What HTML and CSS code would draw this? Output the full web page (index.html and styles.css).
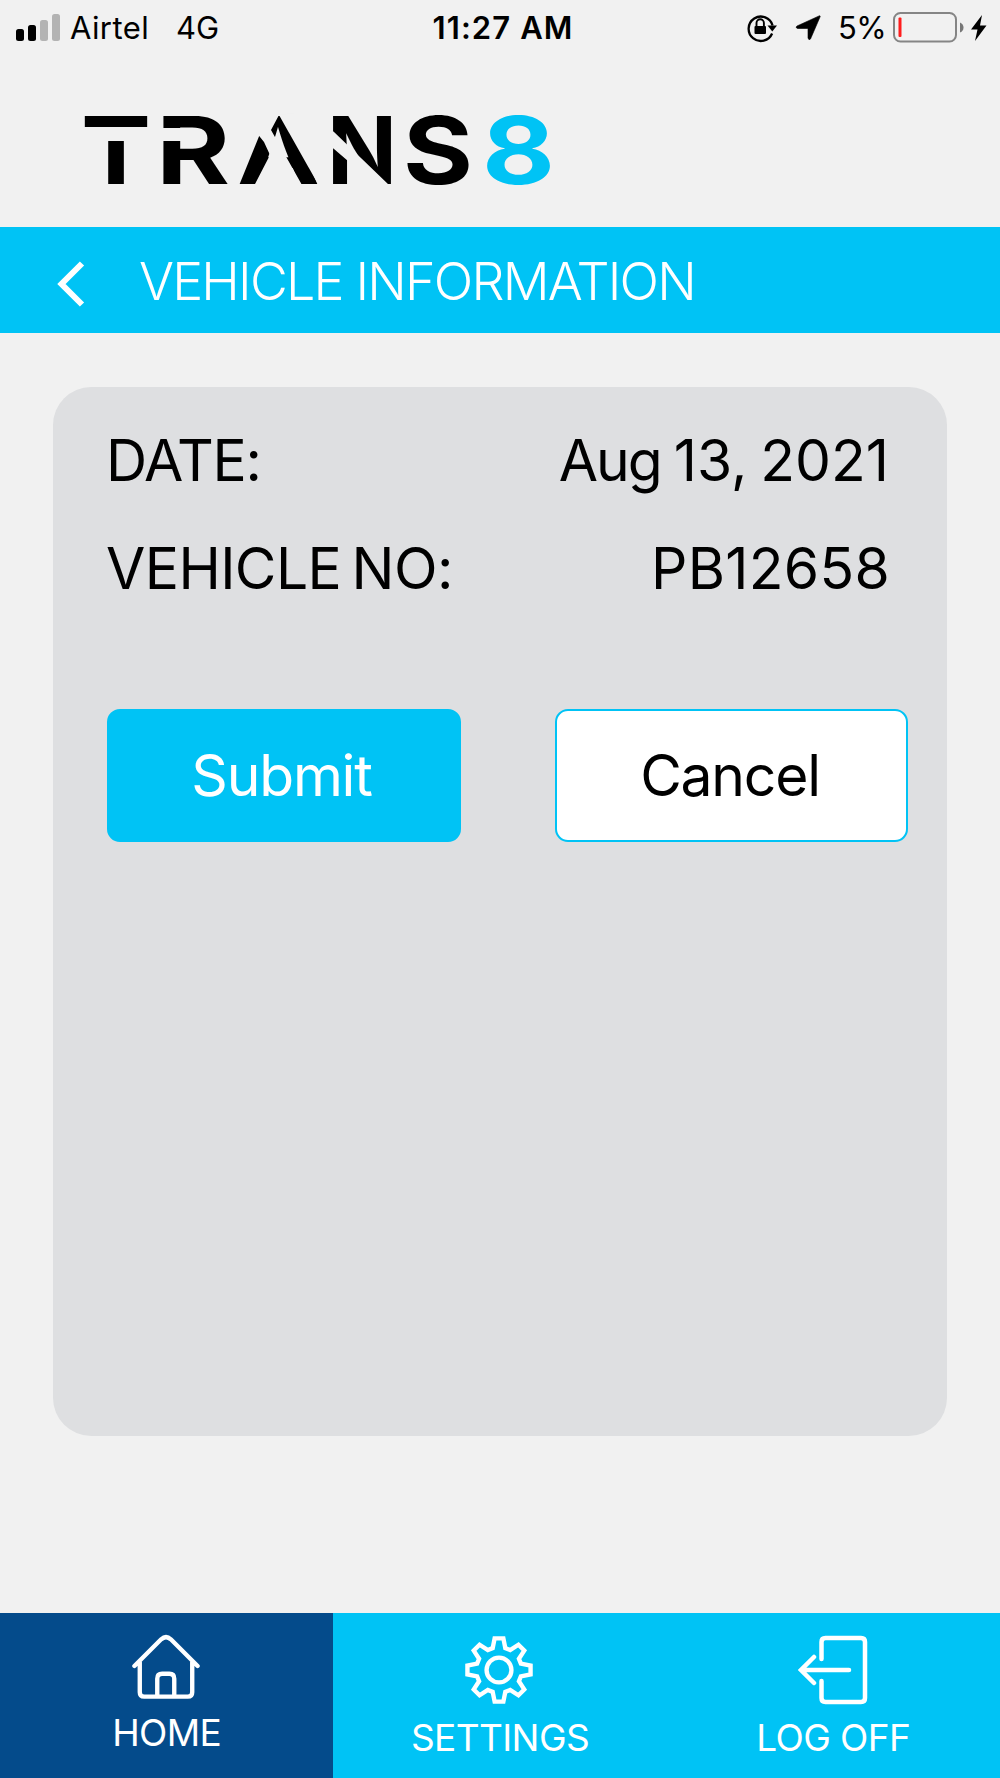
FILE: index.html
```html
<!doctype html>
<html lang="en">
<head>
<meta charset="UTF-8">
<meta name="viewport" content="width=device-width, initial-scale=1">
<title>Trans8 - Vehicle Information</title>

<link rel="stylesheet" href="styles.css">
</head>

<body>
<div class="screen">
    <div class="status-bar">
        <div class="status-left">
            <svg class="signal" width="46" height="28" viewBox="0 0 46 28">
                <rect x="1" y="15" width="8" height="12" rx="2.5"/>
                <rect x="13" y="11" width="8" height="16" rx="2.5"/>
                <rect x="25" y="6" width="8" height="21" rx="2.5" fill="#b3b3b3"/>
                <rect x="37" y="0" width="8" height="27" rx="2.5" fill="#b3b3b3"/>
            </svg>
            <span class="carrier">Airtel</span>
            <span class="network">4G</span>
        </div>
        <div class="clock">11:27 AM</div>
        <div class="status-right">
            <svg class="lock-icon" width="32" height="30" viewBox="0 0 32 30">
                <path d="M26.1 20.5A12.2 12.2 0 1 1 26.6 12.5" fill="none" stroke="#000" stroke-width="2.3"/>
                <path d="M21.5 12.5H31L26.3 18.5Z"/>
                <rect x="8.500" y="13" width="11.5" height="8" rx="1"/>
                <path d="M10.500 13.5V10a3.7 3.7 0 0 1 7.4 0V13.5" fill="none" stroke="#000" stroke-width="1.9"/>
            </svg>
            <svg class="location-icon" width="26" height="26" viewBox="0 0 26 26">
                <path d="M24.6 .7Q25.6 .7 25 2L15.500 24Q13.800 25.800 13 23V13.500H2.500Q0 12.500 2 11Z" stroke="#000" stroke-width=".6"/>
            </svg>
            <span class="percent">5%</span>
            <svg class="battery-icon" width="71" height="32" viewBox="0 0 71 32">
                <rect x="1" y="1" width="62" height="28.500" rx="6.500" fill="none" stroke="#858585" stroke-width="2"/>
                <rect x="5.500" y="5.500" width="3" height="19.500" rx="1" fill="#ff1d1d"/>
                <path d="M67 10.500q3.500 1.500 3.500 5t-3.500 5Z" fill="#777"/>
            </svg>
            <svg class="bolt-icon" width="16" height="26" viewBox="0 0 16 26">
                <path d="M11 0L0 14.500H6.500L4 26L15.500 10.500H9Z"/>
            </svg>
        </div>
    </div>

    <header class="brand">
        <svg class="logo" width="480" height="120" viewBox="80 90 480 120">
            <g class="logo-text">
                <text x="81" y="183" textLength="70" lengthAdjust="spacingAndGlyphs">T</text>
                <text x="156" y="183" textLength="74" lengthAdjust="spacingAndGlyphs">R</text>
                <text x="237" y="183" textLength="83" lengthAdjust="spacingAndGlyphs">A</text>
                <text x="327" y="183" textLength="70" lengthAdjust="spacingAndGlyphs">N</text>
                <text x="403" y="183" textLength="70" lengthAdjust="spacingAndGlyphs">S</text>
                <text class="logo-eight" x="482" y="183" textLength="73" lengthAdjust="spacingAndGlyphs">8</text>
            </g>
            <!-- stencil gaps -->
            <g class="logo-gaps">
                <path d="M82 126h68v14h-68z"/>
                <path d="M160 127h24v13h-24z"/>
                <path d="M271 129L302 184H254.500L270 154L264 141L256 131L262 112L279 114Z"/>
                <path d="M279 114L294 112L321 184H318.500Z"/>
                <path d="M328 126L334 131L389 184H348V160L334 148L328 143Z"/>
            </g>
        </svg>
    </header>

    <div class="title-bar">
        <svg class="back" width="28" height="48" viewBox="0 0 28 48">
            <path d="M25 3.500L4.500 24L25 44.500" fill="none" stroke="#fff" stroke-width="6"/>
        </svg>
        <h1 class="title">VEHICLE INFORMATION</h1>
    </div>

    <main class="card">
        <div class="row">
            <span class="label label-date">DATE:</span>
            <span class="value value-date"><span class="month">Aug</span> 13, 2021</span>
        </div>
        <div class="row">
            <span class="label label-number">VEHICLE NO:</span>
            <span class="value value-number">PB12658</span>
        </div>
        <div class="buttons">
            <button class="btn btn-submit">Submit</button>
            <button class="btn btn-cancel">Cancel</button>
        </div>
    </main>

    <nav class="tabs">
        <a class="tab tab-home active">
            <svg width="68" height="68" viewBox="0 0 70 68">
                <path d="M2.500 33L30 5.500Q35 1 40 5.500L67.500 33M8 29V60Q8 64.500 12.500 64.500H57.500Q62 64.500 62 60V29M26 64V46Q26 41 31 41H38.500Q43.500 41 43.500 46V64"/>
            </svg>
            <span>HOME</span>
        </a>
        <a class="tab tab-settings">
            <svg width="68" height="70" viewBox="0 0 70 70">
                <path d="M30.500 2.500H39.500L41.500 12.500L46.500 14.500L55 9L61 15L55.500 23.500L57.500 28.500L67.500 30.500V39.500L57.500 41.500L55.500 46.500L61 55L55 61L46.500 55.500L41.500 57.500L39.500 67.500H30.500L28.500 57.500L23.500 55.500L15 61L9 55L14.500 46.500L12.500 41.500L2.500 39.500V30.500L12.500 28.500L14.500 23.500L9 15L15 9L23.500 14.500L28.500 12.500Z"/>
                <circle cx="35" cy="35" r="12.800"/>
            </svg>
            <span>SETTINGS</span>
        </a>
        <a class="tab tab-logoff">
            <svg width="70" height="70" viewBox="0 0 70 70">
                <path d="M23.500 24V7Q23.500 3 27.500 3H63Q67 3 67 7V63Q67 67 63 67H27.500Q23.500 67 23.500 63V46M51 35H3M16 22L3 35L16 48"/>
            </svg>
            <span>LOG OFF</span>
        </a>
    </nav>
</div>
</body>
</html>
```
FILE: styles.css
```css
body {
    margin: 0;
    padding: 0;
    background: #f1f1f1;
    color: #000;
    font-family: Inter, "Liberation Sans", sans-serif;
}

.screen {
    display: flex;
    flex-direction: column;
    width: 1000px;
    height: 1778px;
    overflow: hidden;
}

/* Phone status bar */
.status-bar {
    display: grid;
    grid-template-columns: 1fr auto 1fr;
    align-items: center;
    height: 55px;
    padding: 0 13px 0 15px;
    box-sizing: border-box;
    font-size: 31px;
    line-height: 55px;
    white-space: nowrap;
}

.status-left, .status-right {
    display: flex;
    align-items: center;
}

.status-right {
    justify-content: flex-end;
}

.signal {
    margin-right: 9px;
}

.carrier {
    letter-spacing: 0.4px;
}

.network {
    margin-left: 27px;
}

.clock {
    padding-left: 4px;
    font-weight: 600;
    letter-spacing: 1.1px;
}

.location-icon {
    margin-left: 17px;
}

.percent {
    margin: 0 7px 0 17px;
    letter-spacing: -0.6px;
}

.bolt-icon {
    margin-left: 7px;
}

/* Logo */
.brand {
    height: 172px;
    padding: 36px 80px 0;
    box-sizing: border-box;
}

.logo {
    display: block;
    overflow: visible;
}

.logo-text {
    font-size: 93px;
    font-weight: 700;
}

.logo-eight {
    fill: #00c3f5;
}

.logo-gaps {
    fill: #f1f1f1;
}

.title-bar {
    display: flex;
    align-items: center;
    height: 106px;
    padding-left: 57px;
    background: #00c3f5;
    color: #fff;
}

.back {
    margin-top: 8px;
}

.title {
    margin: 3px 0 0 54px;
    font-size: 52px;
    font-weight: 300;
    line-height: 106px;
    letter-spacing: -1.8px;
}

/* Vehicle card */
.card {
    height: 1049px;
    margin: 54px 53px 0;
    padding: 20px 39px 0 54px;
    box-sizing: border-box;
    background: #dedfe1;
    border-radius: 38px;
}

.row {
    display: flex;
    justify-content: space-between;
    height: 108px;
    padding-right: 19px;
    font-size: 57px;
    line-height: 108px;
    white-space: nowrap;
}

.label {
    margin-left: -1px;
}

.label-date {
    letter-spacing: -1.3px;
}

.label-number {
    letter-spacing: -0.6px;
    word-spacing: -5px;
}

.value-date {
    word-spacing: -3px;
}

.month {
    letter-spacing: -2px;
}

.value-number {
    margin-right: -1px;
    letter-spacing: 0.3px;
}

.buttons {
    display: flex;
    justify-content: space-between;
    margin-top: 86px;
}

.btn {
    width: 354px;
    height: 133px;
    padding: 0;
    border: 2px solid #00c3f5;
    border-radius: 13px;
    font-family: inherit;
    font-size: 57px;
    letter-spacing: -1.2px;
}

.btn-submit {
    padding-right: 5px;
    background: #00c3f5;
    color: #fff;
}

.btn-cancel {
    width: 353px;
    padding-right: 3px;
    background: #fff;
    color: #000;
}

/* Bottom tabs */
.tabs {
    display: grid;
    grid-template-columns: repeat(3, 1fr);
    height: 165px;
    margin-top: auto;
    background: #00c3f5;
}

.tab {
    display: flex;
    flex-direction: column;
    align-items: center;
    padding-top: 22px;
    color: #fff;
    font-size: 37px;
    font-weight: 400;
    line-height: 44px;
    letter-spacing: -0.6px;
}

.tab svg {
    margin-right: 2px;
    fill: none;
    stroke: #fff;
    stroke-width: 4.5;
    stroke-linecap: round;
}

.tab span {
    margin-top: 11px;
}

.active {
    background: #044b8b;
}

.tab-home {
    padding-top: 20px;
}

.tab-home span {
    margin-top: 10px;
}

.tab-logoff svg {
    margin-right: 1px;
}
```
